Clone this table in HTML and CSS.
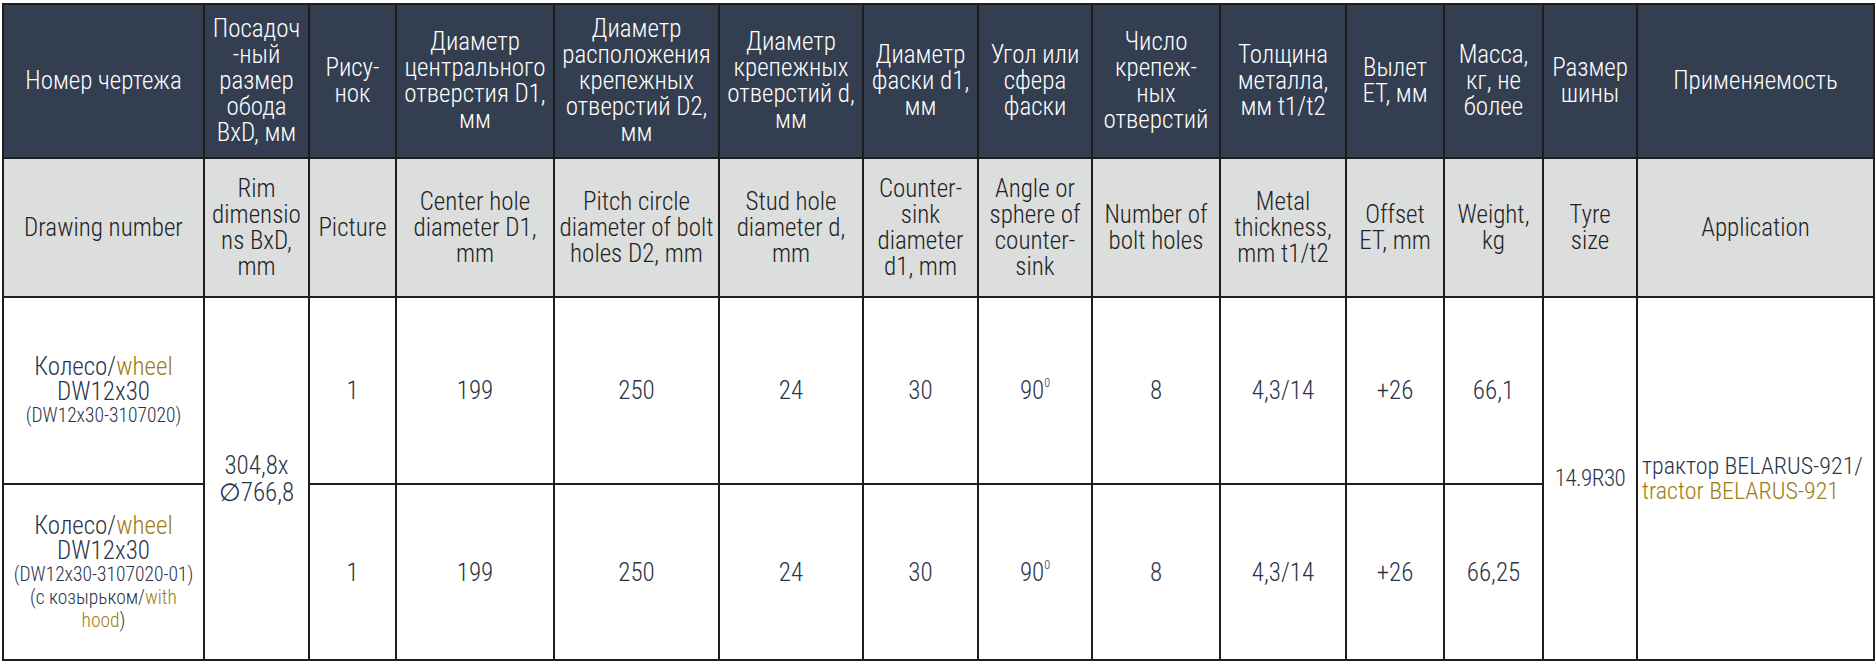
FILE: index.html
```html
<!DOCTYPE html>
<html lang="ru">
<head>
<meta charset="utf-8">
<title>Колесо DW12x30</title>
<link rel="stylesheet" href="styles.css">
</head>
<body>
<table class="spec">
  <colgroup>
    <col class="w201"><col class="w105"><col class="w87"><col class="w158"><col class="w165"><col class="w144"><col class="w115"><col class="w114"><col class="w128"><col class="w126"><col class="w98"><col class="w99"><col class="w94"><col class="w237">
  </colgroup>
  <thead>
    <tr class="ru">
      <th>Номер чертежа</th>
      <th>Посадоч<br>-ный<br>размер<br>обода<br>BxD, мм</th>
      <th>Рису-<br>нок</th>
      <th>Диаметр<br>центрального<br>отверстия D1,<br>мм</th>
      <th>Диаметр<br>расположения<br>крепежных<br>отверстий D2,<br>мм</th>
      <th>Диаметр<br>крепежных<br>отверстий d,<br>мм</th>
      <th>Диаметр<br>фаски d1,<br>мм</th>
      <th>Угол или<br>сфера<br>фаски</th>
      <th>Число<br>крепеж-<br>ных<br>отверстий</th>
      <th>Толщина<br>металла,<br>мм t1/t2</th>
      <th>Вылет<br>ET, мм</th>
      <th>Масса,<br>кг, не<br>более</th>
      <th>Размер<br>шины</th>
      <th>Применяемость</th>
    </tr>
    <tr class="en">
      <th>Drawing number</th>
      <th>Rim<br>dimensio<br>ns BxD,<br>mm</th>
      <th>Picture</th>
      <th>Center hole<br>diameter D1,<br>mm</th>
      <th>Pitch circle<br>diameter of bolt<br>holes D2, mm</th>
      <th>Stud hole<br>diameter d,<br>mm</th>
      <th>Counter-<br>sink<br>diameter<br>d1, mm</th>
      <th>Angle or<br>sphere of<br>counter-<br>sink</th>
      <th>Number of<br>bolt holes</th>
      <th>Metal<br>thickness,<br>mm t1/t2</th>
      <th>Offset<br>ET, mm</th>
      <th>Weight,<br>kg</th>
      <th>Tyre<br>size</th>
      <th>Application</th>
    </tr>
  </thead>
  <tbody>
    <tr class="r1">
      <td>Колесо/<span class="gold">wheel</span><br>DW12x30<span class="code">(DW12x30-3107020)</span></td>
      <td rowspan="2" class="rim">304,8x<br>∅766,8</td>
      <td>1</td>
      <td>199</td>
      <td>250</td>
      <td>24</td>
      <td>30</td>
      <td>90<sup>0</sup></td>
      <td>8</td>
      <td>4,3/14</td>
      <td>+26</td>
      <td>66,1</td>
      <td rowspan="2" class="tyre">14.9R30</td>
      <td rowspan="2" class="app">трактор BELARUS-921/<br><span class="gold">tractor BELARUS-921</span></td>
    </tr>
    <tr class="r2">
      <td>Колесо/<span class="gold">wheel</span><br>DW12x30<span class="code">(DW12x30-3107020-01)<br>(с козырьком/<span class="gold">with</span><br><span class="gold">hood</span>)</span></td>
      <td>1</td>
      <td>199</td>
      <td>250</td>
      <td>24</td>
      <td>30</td>
      <td>90<sup>0</sup></td>
      <td>8</td>
      <td>4,3/14</td>
      <td>+26</td>
      <td>66,25</td>
    </tr>
  </tbody>
</table>
</body>
</html>
```
FILE: styles.css
```css
html, body {
  margin: 0;
  padding: 0;
  background: #ffffff;
}
body {
  padding: 3px 2px 0 2px;
  font-family: "Roboto Condensed", "Liberation Sans Narrow", "Roboto", sans-serif;
  font-weight: 300;
}
.spec {
  border-collapse: collapse;
  table-layout: fixed;
  width: 1871px;
  border: 2px solid #2b2b2b;
}
.spec th, .spec td {
  border: 2px solid #1e1e1e;
  text-align: center;
  vertical-align: middle;
  padding: 0 2px;
  font-size: 25px;
  line-height: 26px;
  font-weight: 300;
}
.w201 { width: 201px; }
.w105 { width: 105px; }
.w87 { width: 87px; }
.w158 { width: 158px; }
.w165 { width: 165px; }
.w144 { width: 144px; }
.w115 { width: 115px; }
.w114 { width: 114px; }
.w128 { width: 128px; }
.w126 { width: 126px; }
.w98 { width: 98px; }
.w99 { width: 99px; }
.w94 { width: 94px; }
.w237 { width: 237px; }
.ru th {
  background: #333e50;
  color: #ffffff;
  height: 152px;
}
.en th {
  background: #dcdedd;
  color: #222222;
  height: 137px;
}
.spec tbody td {
  color: #2b3346;
  background: #ffffff;
  line-height: 25px;
}
.r1 td { height: 185px; }
.r2 td { height: 174px; }
.gold { color: #9e7b12; }
.code {
  display: block;
  font-size: 19.5px;
  line-height: 23px;
}
.spec td.rim { line-height: 27px; }
.spec td.tyre {
  font-size: 23px;
  letter-spacing: -0.5px;
  padding: 0;
}
sup {
  font-size: 12px;
  vertical-align: top;
  line-height: 12px;
  position: relative;
  top: -1px;
}
.spec td.app {
  text-align: left;
  padding-left: 4px;
  font-size: 24px;
  white-space: nowrap;
}
```
